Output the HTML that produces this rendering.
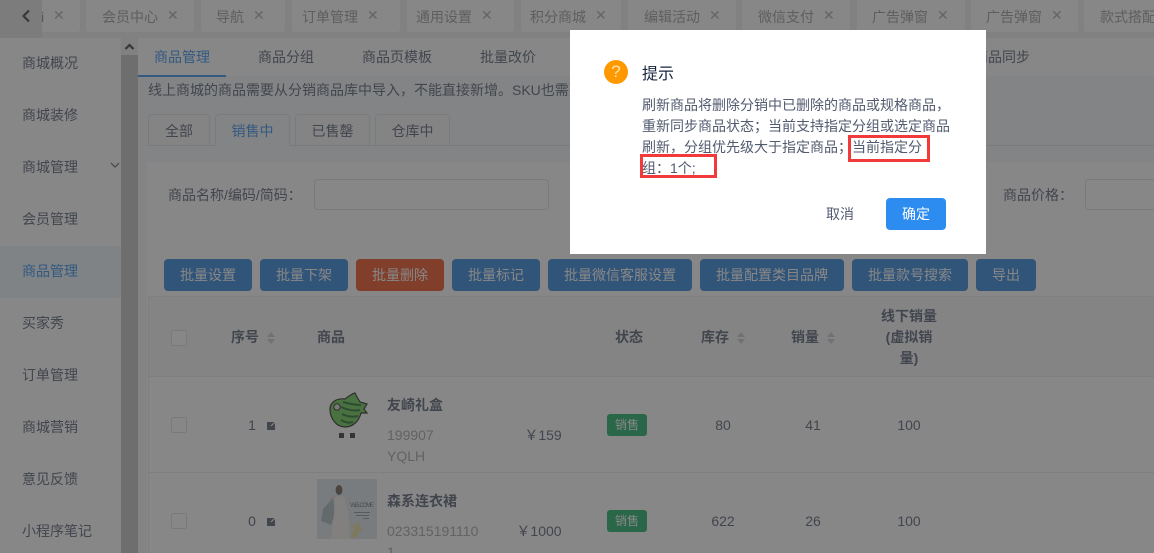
<!DOCTYPE html>
<html lang="zh">
<head>
<meta charset="utf-8">
<style>
html,body{margin:0;padding:0;width:1154px;height:553px;overflow:hidden;background:#fff}
#root{position:absolute;left:0;top:0;width:1154px;height:553px;overflow:hidden;background:#fff;font-family:"Liberation Sans","Noto Sans CJK SC",sans-serif;font-size:14px;color:#515a6e}
#root div,#root span{position:absolute;white-space:nowrap;box-sizing:border-box}
.t{line-height:20px;height:20px}
.tab{top:0;height:32px;background:#fff;border-radius:0 0 3px 3px}
.tt{top:7px;color:#999;line-height:20px}
.x{color:#aaa;font-size:14px;line-height:16px;top:7px}
.side{left:22px;color:#515a6e;line-height:20px}
.btn{top:259px;height:32px;background:#2a80dc;border-radius:4px;color:#fff;text-align:center;line-height:32px}
.st{top:114px;height:32px;border:1px solid #dcdee2;border-radius:4px 4px 0 0;text-align:center;line-height:32px;color:#515a6e;background:#f8f8f9}
.hline{height:1px;background:#e8eaec}
.th{font-weight:bold;color:#515a6e;line-height:20px}
.cb{left:171px;width:16px;height:16px;border:1px solid #dcdee2;border-radius:2px;background:#fff}
.tag{left:607px;width:40px;height:22px;background:#18b065;border-radius:3px;color:#fff;font-size:12px;line-height:23px;text-align:center}
.c{transform:translateX(-50%);line-height:20px;color:#515a6e}
.g{color:#a0a3a8;line-height:20px}
.up,.dn{width:0;height:0;border-left:4px solid transparent;border-right:4px solid transparent}
.up{border-bottom:5px solid #c5c8ce}
.dn{border-top:5px solid #c5c8ce}
.d{left:642px;color:#515a6e;line-height:21px}
</style>
</head>
<body>
<div id="root">
<!-- top tabs -->
<div style="left:0;top:0;width:1154px;height:38px;background:#f0f0f0"></div>
<div style="left:0;top:0;width:42px;height:38px;background:#e4e4e4"></div>
<div class="tab" style="left:42px;width:38px"></div>
<div class="tab" style="left:86px;width:108px"></div>
<div class="tab" style="left:201px;width:84px"></div>
<div class="tab" style="left:292px;width:108px"></div>
<div class="tab" style="left:407px;width:107px"></div>
<div class="tab" style="left:521px;width:100px"></div>
<div class="tab" style="left:628px;width:108px"></div>
<div class="tab" style="left:742px;width:108px"></div>
<div class="tab" style="left:857px;width:108px"></div>
<div class="tab" style="left:971px;width:107px"></div>
<div class="tab" style="left:1084px;width:70px"></div>
<svg style="position:absolute;left:21px;top:9px" width="10" height="14" viewBox="0 0 10 14"><path d="M8 1.5 L2.5 7 L8 12.5" fill="none" stroke="#3a3a3a" stroke-width="2.2"/></svg>
<span class="tt" style="left:41px;color:#888">i</span>
<span class="x" style="left:53px">✕</span>
<span class="tt" style="left:102px">会员中心</span><span class="x" style="left:167px">✕</span>
<span class="tt" style="left:216px">导航</span><span class="x" style="left:253px">✕</span>
<span class="tt" style="left:302px">订单管理</span><span class="x" style="left:367px">✕</span>
<span class="tt" style="left:416px">通用设置</span><span class="x" style="left:481px">✕</span>
<span class="tt" style="left:530px">积分商城</span><span class="x" style="left:595px">✕</span>
<span class="tt" style="left:644px">编辑活动</span><span class="x" style="left:709px">✕</span>
<span class="tt" style="left:758px">微信支付</span><span class="x" style="left:823px">✕</span>
<span class="tt" style="left:872px">广告弹窗</span><span class="x" style="left:937px">✕</span>
<span class="tt" style="left:986px">广告弹窗</span><span class="x" style="left:1051px">✕</span>
<span class="tt" style="left:1100px">款式搭配</span>

<!-- sidebar -->
<div style="left:0;top:38px;width:121px;height:515px;background:#fff"></div>
<div style="left:0;top:246px;width:121px;height:52px;background:#eaf4fb"></div>
<div style="left:121px;top:38px;width:17px;height:515px;background:#c1c1c1"></div>
<div style="left:121px;top:38px;width:17px;height:17px;background:#f1f1f1"></div>
<svg style="position:absolute;left:124px;top:42px" width="11" height="9" viewBox="0 0 11 9"><path d="M1.5 7 L5.5 3 L9.5 7" fill="none" stroke="#333" stroke-width="2.2"/></svg>
<span class="side" style="top:53px">商城概况</span>
<span class="side" style="top:105px">商城装修</span>
<span class="side" style="top:157px">商城管理</span>
<svg style="position:absolute;left:110px;top:162px" width="10" height="7" viewBox="0 0 10 7"><path d="M1 1 L5 5 L9 1" fill="none" stroke="#515a6e" stroke-width="1.2"/></svg>
<span class="side" style="top:209px">会员管理</span>
<span class="side" style="top:261px;color:#2d8cf0">商品管理</span>
<span class="side" style="top:313px">买家秀</span>
<span class="side" style="top:365px">订单管理</span>
<span class="side" style="top:417px">商城营销</span>
<span class="side" style="top:469px">意见反馈</span>
<span class="side" style="top:521px">小程序笔记</span>

<!-- main -->
<div style="left:138px;top:38px;width:1016px;height:38px;background:#fff"></div>
<div style="left:138px;top:76px;width:1016px;height:86px;background:#f5f7f9"></div>
<div style="left:138px;top:162px;width:1016px;height:391px;background:#f5f7f9"></div>
<div style="left:147px;top:162px;width:1007px;height:391px;background:#fff"></div>
<span class="t" style="left:154px;top:47px;color:#2d8cf0">商品管理</span>
<span class="t" style="left:258px;top:47px">商品分组</span>
<span class="t" style="left:362px;top:47px">商品页模板</span>
<span class="t" style="left:480px;top:47px">批量改价</span>
<span class="t" style="left:974px;top:47px">商品同步</span>
<div style="left:138px;top:75px;width:88px;height:2px;background:#2d8cf0"></div>
<span class="t" style="left:148px;top:80px">线上商城的商品需要从分销商品库中导入，不能直接新增。SKU也需要从分销商品库中导入</span>

<div class="hline" style="left:148px;top:145px;width:1006px;background:#dcdee2"></div>
<div class="st" style="left:148px;width:62px">全部</div>
<div class="st" style="left:215px;width:75px;color:#2d8cf0;border-bottom-color:#f5f7f9;background:#f5f7f9">销售中</div>
<div class="st" style="left:295px;width:75px">已售罄</div>
<div class="st" style="left:375px;width:75px">仓库中</div>

<span class="t" style="left:168px;top:185px">商品名称/编码/简码：</span>
<div style="left:314px;top:179px;width:235px;height:31px;border:1px solid #dcdee2;border-radius:4px"></div>
<span class="t" style="left:1003px;top:185px">商品价格：</span>
<div style="left:1085px;top:179px;width:80px;height:31px;border:1px solid #dcdee2;border-radius:4px"></div>

<div class="btn" style="left:164px;width:88px">批量设置</div>
<div class="btn" style="left:260px;width:88px">批量下架</div>
<div class="btn" style="left:356px;width:88px;background:#f04a1a">批量删除</div>
<div class="btn" style="left:452px;width:88px">批量标记</div>
<div class="btn" style="left:548px;width:144px">批量微信客服设置</div>
<div class="btn" style="left:700px;width:144px">批量配置类目品牌</div>
<div class="btn" style="left:852px;width:116px">批量款号搜索</div>
<div class="btn" style="left:976px;width:60px">导出</div>

<!-- table -->
<div style="left:148px;top:296px;width:1006px;height:81px;background:#f8f8f9"></div>
<div class="hline" style="left:148px;top:296px;width:1006px"></div>
<div class="hline" style="left:148px;top:376px;width:1006px"></div>
<div class="hline" style="left:148px;top:472px;width:1006px"></div>
<div style="left:148px;top:296px;width:1px;height:257px;background:#e8eaec"></div>

<div class="cb" style="top:330px"></div>
<span class="th" style="left:231px;top:327px">序号</span>
<div class="up" style="left:267px;top:332px"></div><div class="dn" style="left:267px;top:339px"></div>
<span class="th" style="left:317px;top:327px">商品</span>
<span class="th" style="left:615px;top:327px">状态</span>
<span class="th" style="left:701px;top:327px">库存</span>
<div class="up" style="left:737px;top:332px"></div><div class="dn" style="left:737px;top:339px"></div>
<span class="th" style="left:791px;top:327px">销量</span>
<div class="up" style="left:827px;top:332px"></div><div class="dn" style="left:827px;top:339px"></div>
<div class="th" style="left:869px;top:306px;width:80px;text-align:center;line-height:21px;white-space:normal">线下销量<br>(虚拟销<br>量)</div>

<!-- row 1 -->
<div class="cb" style="top:417px"></div>
<span class="c" style="left:252px;top:415px">1</span>
<svg style="position:absolute;left:267px;top:420px" width="10" height="10" viewBox="0 0 10 10"><rect x="0" y="2" width="8" height="8" fill="#515a6e"/><path d="M4 6 L9 1" stroke="#fff" stroke-width="1.2"/></svg>
<svg style="position:absolute;left:320px;top:385px" width="60" height="60" viewBox="0 0 60 60">
<path d="M10 24 C10 17 17 13 25 14 C28 12 31 9 35 8 L37 12 L40 17 L47 19 L44 24 L47 28 L41 28 C39 36 33 42 25 42 C16 42 10 33 10 24Z" fill="#66c94e" stroke="#222" stroke-width="1.2"/>
<path d="M23 17 C30 19 36 20 41 20 M21 22 C30 26 36 26 40 25 M22 29 C28 32 34 32 38 31 M21 35 C26 38 30 38 33 37" stroke="#1f6b2a" stroke-width="2" fill="none"/>
<circle cx="17" cy="22" r="3.2" fill="#ddd" stroke="#222" stroke-width="1"/>
<rect x="19" y="48" width="5" height="5" fill="#333"/><rect x="30" y="48" width="5" height="5" fill="#333"/>
</svg>
<span class="th" style="left:387px;top:395px">友崎礼盒</span>
<span class="g" style="left:387px;top:425px">199907</span>
<span class="g" style="left:387px;top:446px">YQLH</span>
<span class="c" style="left:543px;top:425px">￥159</span>
<div class="tag" style="top:414px">销售</div>
<span class="c" style="left:723px;top:415px">80</span>
<span class="c" style="left:813px;top:415px">41</span>
<span class="c" style="left:909px;top:415px">100</span>

<!-- row 2 -->
<div class="cb" style="top:513px"></div>
<span class="c" style="left:252px;top:511px">0</span>
<svg style="position:absolute;left:267px;top:516px" width="10" height="10" viewBox="0 0 10 10"><rect x="0" y="2" width="8" height="8" fill="#515a6e"/><path d="M4 6 L9 1" stroke="#fff" stroke-width="1.2"/></svg>
<svg style="position:absolute;left:317px;top:479px" width="60" height="60" viewBox="0 0 60 60" font-family="Liberation Sans, sans-serif">
<rect width="60" height="60" fill="#d9e4ea"/>
<path d="M16 19 L6 30 L4 42 L14 46 L18 34Z" fill="#a9b4ba"/>
<path d="M18 18 L27 17 L31 32 L33 60 L14 60 L17 36Z" fill="#f2ecea"/>
<ellipse cx="22" cy="11" rx="3.4" ry="5" fill="#6a5a50"/>
<path d="M13 20 L19 17" stroke="#e8cfc0" stroke-width="1.5"/>
<text x="33" y="28" font-size="6.4" fill="#6b6f72" textLength="24">WELCOME</text>
<rect x="37" y="33" width="16" height="1" fill="#8b9095"/><rect x="39" y="36" width="13" height="1" fill="#8b9095"/><rect x="46" y="39" width="6" height="1" fill="#8b9095"/>
<path d="M33 58 L37 50 L32 44 L39 47 L42 41 L43 49 L47 52 L41 53 L40 59Z" fill="#e8dc9a"/>
</svg>
<span class="th" style="left:387px;top:491px">森系连衣裙</span>
<span class="g" style="left:387px;top:521px">023315191110</span>
<span class="g" style="left:387px;top:542px">1</span>
<span class="c" style="left:539px;top:521px">￥1000</span>
<div class="tag" style="top:510px">销售</div>
<span class="c" style="left:723px;top:511px">622</span>
<span class="c" style="left:813px;top:511px">26</span>
<span class="c" style="left:909px;top:511px">100</span>

<!-- mask -->
<div style="left:0;top:0;width:1154px;height:553px;background:rgba(55,55,55,.6)"></div>

<!-- dialog -->
<div style="left:570px;top:30px;width:416px;height:224px;background:#fff"></div>
<div style="left:604px;top:60px;width:24px;height:24px;border-radius:50%;background:#ff9900;color:#ffe2ad;text-align:center;line-height:24px;font-size:17px">?</div>
<span style="left:642px;top:63px;font-size:16px;line-height:24px;color:#17233d">提示</span>
<span class="d" style="top:95px">刷新商品将删除分销中已删除的商品或规格商品，</span>
<span class="d" style="top:116px">重新同步商品状态；当前支持指定分组或选定商品</span>
<span class="d" style="top:137px">刷新，分组优先级大于指定商品；当前指定分</span>
<span class="d" style="top:158px">组：1个;</span>
<div style="left:848px;top:135px;width:82px;height:27px;border:3px solid #f33a3a"></div>
<div style="left:640px;top:154px;width:77px;height:24px;border:3px solid #f33a3a"></div>
<span class="t" style="left:826px;top:204px;color:#515a6e">取消</span>
<div style="left:886px;top:198px;width:60px;height:32px;background:#2d8cf0;border-radius:4px;color:#fff;text-align:center;line-height:32px">确定</div>
</div>
</body>
</html>
